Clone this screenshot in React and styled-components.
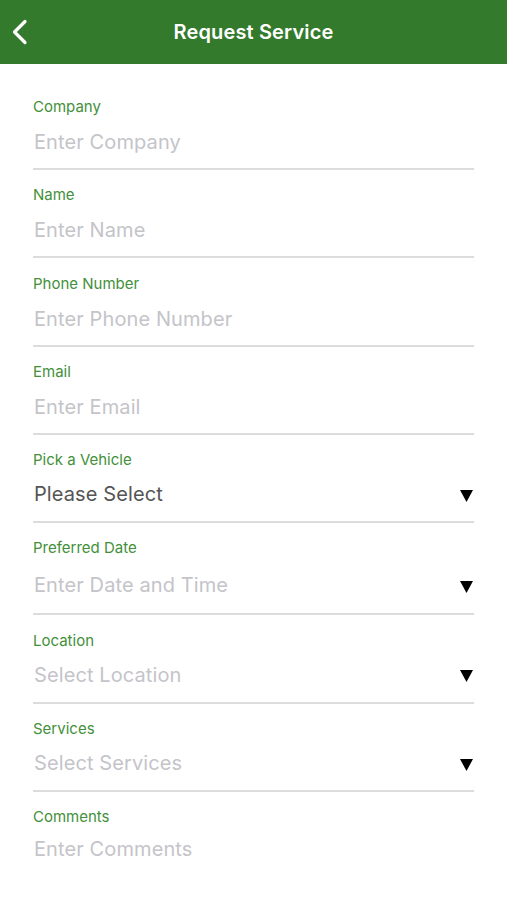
import React from "react";
import styled, { createGlobalStyle } from "styled-components";

const Global = createGlobalStyle`
  html, body { margin: 0; padding: 0; background: #ffffff; }
  body { font-family: Inter, "Open Sans", "Liberation Sans", sans-serif; }
  * { box-sizing: border-box; }
`;

const Page = styled.div`
  width: 507px;
  min-height: 900px;
  background: #fff;
`;

const Header = styled.header`
  height: 64px;
  background: #337a2c;
  display: grid;
  grid-template-columns: 60px 1fr 60px;
  align-items: center;
`;

const BackButton = styled.button`
  border: 0;
  background: none;
  padding: 0 0 0 11px;
  height: 64px;
  display: flex;
  align-items: center;
  cursor: pointer;
`;

const Title = styled.h1`
  margin: 0;
  text-align: center;
  color: #fff;
  font-size: 20px;
  font-weight: 600;
  letter-spacing: 0.15px;
`;

const Form = styled.form`
  padding: 17.7px 33px 0 33px;
  display: flex;
  flex-direction: column;
`;

const Field = styled.div`
  padding-top: 16.3px;
  display: flex;
  flex-direction: column;
`;

const Label = styled.label`
  height: 18px;
  line-height: 18px;
  font-size: 15px;
  color: #43903a;
  font-weight: 400;
`;

const InputRow = styled.div`
  height: ${(p) => p.$h}px;
  padding-bottom: ${(p) => p.$lift}px;
  display: flex;
  align-items: center;
  justify-content: space-between;
`;

const Value = styled.span`
  font-size: 20px;
  padding-left: 1px;
  letter-spacing: 0.1px;
  color: ${(p) => (p.$filled ? "#555555" : "#c4c4c9")};
`;

const Divider = styled.div`
  height: 2px;
  background: #dcdcdc;
`;

const Caret = () => (
  <svg width="13" height="13" viewBox="0 0 13 13" style={{ marginRight: 1, marginTop: 2 }}>
    <polygon points="0,1 13,1 6.5,13" fill="#000" />
  </svg>
);

const fields = [
  { label: "Company", value: "Enter Company", h: 52, lift: 0 },
  { label: "Name", value: "Enter Name", h: 52, lift: 0 },
  { label: "Phone Number", value: "Enter Phone Number", h: 52, lift: 0 },
  { label: "Email", value: "Enter Email", h: 52, lift: 0 },
  { label: "Pick a Vehicle", value: "Please Select", filled: true, select: true, h: 52, lift: 2 },
  { label: "Preferred Date", value: "Enter Date and Time", select: true, h: 56, lift: 0 },
  { label: "Location", value: "Select Location", select: true, h: 52, lift: 2 },
  { label: "Services", value: "Select Services", select: true, h: 52, lift: 2 },
  { label: "Comments", value: "Enter Comments", last: true, h: 52, lift: 6 },
];

export default function App() {
  return (
    <Page>
      <Global />
      <Header>
        <BackButton aria-label="Back">
          <svg width="18" height="26" viewBox="0 0 18 26">
            <polyline
              points="14,2.5 3.5,13 14,23.5"
              fill="none"
              stroke="#fff"
              strokeWidth="3.2"
              strokeLinecap="round"
              strokeLinejoin="round"
            />
          </svg>
        </BackButton>
        <Title>Request Service</Title>
        <div />
      </Header>
      <Form>
        {fields.map((f) => (
          <Field key={f.label}>
            <Label>{f.label}</Label>
            <InputRow $h={f.h} $lift={f.lift}>
              <Value $filled={f.filled}>{f.value}</Value>
              {f.select && <Caret />}
            </InputRow>
            {!f.last && <Divider />}
          </Field>
        ))}
      </Form>
    </Page>
  );
}
